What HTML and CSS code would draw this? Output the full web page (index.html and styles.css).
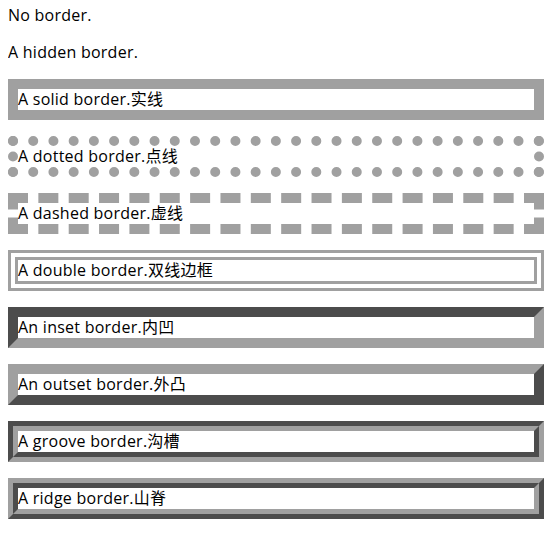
FILE: index.html
```html
<!DOCTYPE html>
<html>
<head>
<meta charset="utf-8">
<link rel="stylesheet" href="styles.css">
</head>
<body>
<p class="box none first">No border.</p>
<p class="box hidden">A hidden border.</p>
<p class="box solid">A solid border.实线</p>
<p class="box dotted">A dotted border.点线</p>
<p class="box dashed">A dashed border.虚线</p>
<p class="box double">A double border.双线边框</p>
<p class="box inset">An inset border.内凹</p>
<p class="box outset">An outset border.外凸</p>
<p class="box groove">A groove border.沟槽</p>
<p class="box ridge">A ridge border.山脊</p>
</body>
</html>
```
FILE: styles.css
```css
html, body {
  background: #ffffff;
}
body {
  margin: 0 8px;
  font-family: "Open Sans", "Noto Sans CJK SC", sans-serif;
  font-size: 16px;
  letter-spacing: 0.25px;
  color: #000000;
}
.box {
  margin: 16px 0;
  line-height: 21px;
  border-width: 10px;
  border-color: #a0a0a0;
}
.first { margin-top: 5px; }
.none { border-style: none; }
.hidden { border-style: hidden; }
.solid { border-style: solid; }
.dotted { border-style: dotted; }
.dashed { border-style: dashed; }
.double { border-style: double; }
.inset { border-style: inset; }
.outset { border-style: outset; }
.groove { border-style: groove; }
.ridge { border-style: ridge; }
```
